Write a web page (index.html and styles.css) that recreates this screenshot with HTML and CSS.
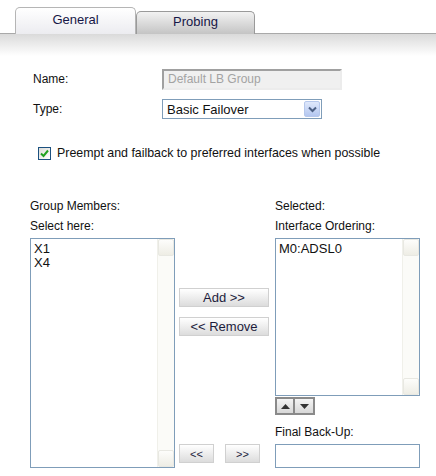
FILE: index.html
```html
<!DOCTYPE html>
<html lang="en">
<head>
  <meta charset="UTF-8" />
  <title>Load Balancing Group</title>
  <link rel="stylesheet" href="styles.css">
</head>
<body>

  <!-- Tabs -->
  <div class="tabs">
    <div class="tab active">General</div>
    <div class="tab">Probing</div>
  </div>
  <div class="tab-shade"></div>

  <div class="form">
    <div class="row">
      <label>Name:</label>
      <input type="text" class="name-input" value="Default LB Group" disabled />
    </div>
    <div class="row">
      <label>Type:</label>
      <div class="select">
        <span>Basic Failover</span>
        <span class="select-btn">
          <svg width="9" height="7" viewBox="0 0 9 7"><path d="M1 1.5 L4.5 5 L8 1.5" fill="none" stroke="#4d6185" stroke-width="2"/></svg>
        </span>
      </div>
    </div>

    <div class="check-row">
      <span class="checkbox">
        <svg width="9" height="9" viewBox="0 0 9 9"><path d="M1 4.5 L3.5 7 L8 1.5" fill="none" stroke="#21a121" stroke-width="2"/></svg>
      </span>
      Preempt and failback to preferred interfaces when possible
    </div>
  </div>

  <div class="members">
    <div class="col">
      <div class="caption">Group Members:</div>
      <div class="caption">Select here:</div>
      <div class="listbox tall">
        <div class="items">
          <div>X1</div>
          <div>X4</div>
        </div>
        <div class="scroll"><span class="arrow up"></span><span class="arrow down"></span></div>
      </div>
    </div>

    <div class="middle">
      <button class="btn wide add">Add &gt;&gt;</button>
      <button class="btn wide">&lt;&lt; Remove</button>
      <div class="small-btns">
        <button class="btn small">&lt;&lt;</button>
        <button class="btn small">&gt;&gt;</button>
      </div>
    </div>

    <div class="col">
      <div class="caption">Selected:</div>
      <div class="caption">Interface Ordering:</div>
      <div class="listbox short">
        <div class="items">
          <div>M0:ADSL0</div>
        </div>
        <div class="scroll"><span class="arrow up"></span><span class="arrow down"></span></div>
      </div>
      <div class="order-btns">
        <span class="order-btn"><svg width="9" height="5" viewBox="0 0 9 5"><path d="M0 5 L4.5 0 L9 5 Z" fill="#333"/></svg></span>
        <span class="order-btn"><svg width="9" height="5" viewBox="0 0 9 5"><path d="M0 0 L4.5 5 L9 0 Z" fill="#333"/></svg></span>
      </div>
      <div class="caption backup">Final Back-Up:</div>
      <div class="backup-input"></div>
    </div>
  </div>

</body>
</html>
```

FILE: styles.css
```css
* {
  box-sizing: border-box;
}

body {
  margin: 0;
  font-family: 'Liberation Sans', Arial, sans-serif;
  font-size: 12px;
  color: #111;
  background: #fff;
}

/* Tabs */
.tabs {
  display: flex;
  align-items: flex-end;
  height: 34px;
  padding-left: 15px;
  border-bottom: 1px solid #a9a9a9;
}

.tab {
  width: 119px;
  height: 23px;
  margin-bottom: -1px;
  border: 1px solid #9a9a9a;
  border-bottom: none;
  border-radius: 5px 5px 0 0;
  background: linear-gradient(#f2f2f2, #c4c4c4);
  color: #161646;
  font-size: 13px;
  text-align: center;
  line-height: 20px;
}

.tab.active {
  width: 121px;
  height: 27px;
  line-height: 24px;
  background: linear-gradient(#ffffff, #ececf0);
  border-color: #b5b5b5;
}

.tab-shade {
  height: 22px;
  background: linear-gradient(#dadada, #ffffff);
}

/* Form */
.form {
  padding: 8px 0 0 33px;
}

.row {
  display: flex;
  align-items: center;
  height: 30px;
}

.row label {
  width: 129px;
}

.name-input {
  width: 180px;
  height: 21px;
  padding: 1px 4px;
  font: inherit;
  color: #a3a3a3;
  background: #f0f0f0;
  border: 2px solid #ececec;
  border-top-color: #a0a0a0;
  border-left-color: #a0a0a0;
}

.select {
  display: flex;
  align-items: center;
  justify-content: space-between;
  width: 160px;
  height: 20px;
  padding-left: 4px;
  border: 1px solid #7f9db9;
  font-size: 13px;
}

.select-btn {
  display: flex;
  align-items: center;
  justify-content: center;
  width: 16px;
  height: 16px;
  margin-right: 1px;
  border: 1px solid #b6c8ec;
  border-radius: 2px;
  background: linear-gradient(#dfe8fb, #b4c7f0);
}

.check-row {
  display: flex;
  align-items: center;
  gap: 6px;
  height: 14px;
  margin-top: 22px;
  padding-left: 5px;
  font-size: 12.4px;
}

.checkbox {
  display: flex;
  align-items: center;
  justify-content: center;
  width: 13px;
  height: 13px;
  border: 1px solid #1c5180;
  background: linear-gradient(135deg, #dcdcd7, #ffffff);
}

/* Members */
.members {
  display: flex;
  margin-top: 36px;
  padding-left: 30px;
}

.col {
  display: flex;
  flex-direction: column;
  width: 145px;
}

.caption {
  height: 20px;
  line-height: 20px;
}

.listbox {
  display: flex;
  margin-top: 2px;
  border: 1px solid #7f9db9;
  font-size: 13px;
}

.listbox.tall {
  height: 230px;
}

.listbox.short {
  height: 158px;
}

.items {
  flex: 1;
  padding: 3px 0 0 3px;
  line-height: 14px;
}

.scroll {
  display: flex;
  flex-direction: column;
  justify-content: space-between;
  width: 17px;
  background: #fbfbf8;
  border-left: 1px solid #f0f0ea;
}

.arrow {
  height: 17px;
  background: linear-gradient(#fdfdfb, #eeede5);
  border: 1px solid #e8e8e2;
  border-radius: 2px;
}

.middle {
  display: flex;
  flex-direction: column;
  width: 100px;
  padding: 92px 0 0 4px;
}

.btn {
  height: 19px;
  padding: 0;
  border: 1px solid #d0d0d0;
  background: linear-gradient(#ffffff, #dcdcdc);
  font-family: inherit;
  font-size: 13px;
  color: #1c1c3c;
}

.btn.wide {
  width: 90px;
  margin-bottom: 10px;
}

.small-btns {
  display: flex;
  gap: 11px;
  margin-top: 98px;
}

.btn.small {
  width: 35px;
  font-size: 11px;
}

.order-btns {
  display: flex;
  margin-top: 1px;
}

.order-btn {
  display: flex;
  align-items: center;
  justify-content: center;
  width: 20px;
  height: 18px;
  border: 2px solid #8a8a8a;
  background: linear-gradient(#f4f4f4, #d8d8d8);
}

.order-btn + .order-btn {
  border-left: none;
}

.caption.backup {
  margin-top: 7px;
}

.backup-input {
  height: 24px;
  margin-top: 2px;
  border: 1px solid #7f9db9;
}
```
